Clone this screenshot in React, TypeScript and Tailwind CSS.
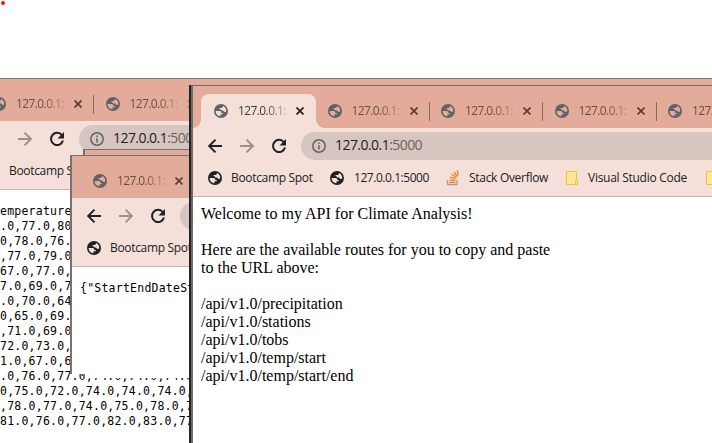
import React from "react";

function Globe({ dim = false }: { dim?: boolean }) {
  return (
    <svg viewBox="0 0 28 28" className={"h-3.5 w-3.5 shrink-0 " + (dim ? "text-[#5f6368]" : "text-[#202124]")}>
      <path
        fill="currentColor"
        fillRule="evenodd"
        d="M14 0a14 14 0 1 0 0 28a14 14 0 0 0 0-28zM3.200 14H11C14 14 14.500 16 14.500 17.800H17.500V20.500H13V24.500A11 11 0 0 1 3.200 14zM18 4.200A10.800 10.800 0 0 1 24.500 14.500C23.500 16.200 21 16.500 19.500 15.200L18.500 13H15.500C13.500 13 13 11.500 13 10H11V7.800H15C17 7.800 18 6.500 18 4.200z"
      />
    </svg>
  );
}

function Cross({ active }: { active: boolean }) {
  return (
    <svg viewBox="0 0 8 8" className={"h-2 w-2 shrink-0 " + (active ? "text-[#202124]" : "text-[#56403c]")}>
      <path d="M.5.5l7 7M7.500.500l-7 7" stroke="currentColor" strokeWidth="1.700" />
    </svg>
  );
}

function Tab({ active }: { active: boolean }) {
  return (
    <div className={"relative flex h-[34px] w-[113.5px] shrink-0 items-center pl-[13px] " + (active ? "rounded-t-lg bg-[#f5e0d9]" : "")}>
      {active && (
        <>
          <span className="absolute bottom-0 -left-2 h-2 w-2 bg-[radial-gradient(circle_at_0_0,#e3ab9a_7.5px,#f5e0d9_8px)]" />
          <span className="absolute -right-[9.5px] bottom-0 h-2 w-2 bg-[radial-gradient(circle_at_100%_0,#e3ab9a_7.5px,#f5e0d9_8px)]" />
          <span className="absolute top-0 -right-[1.5px] h-full w-2 rounded-tr-lg bg-[#f5e0d9]" />
        </>
      )}
      <Globe dim />
      <span
        className={
          "relative ml-[10px] w-[49px] text-[12px] leading-4 tracking-[-0.6px] whitespace-nowrap [mask-image:linear-gradient(to_right,black_55%,transparent_115%)] " +
          (active ? "text-[#3c4043]" : "text-[#6d4f4a]")
        }
      >
        127.0.0.1:
      </span>
      <span className="relative ml-[9px] flex">
        <Cross active={active} />
      </span>
      {!active && <span className="absolute top-[8px] right-[-1.5px] h-[19px] w-px bg-[#8f675c]" />}
    </div>
  );
}

function Arrow({ forward = false }: { forward?: boolean }) {
  return (
    <svg viewBox="0 0 14 14" className={"h-3.5 w-3.5 shrink-0 " + (forward ? "rotate-180 text-[#a08e8a]" : "text-[#202124]")}>
      <path d="M14 7H1.500M7.500.700L1.200 7l6.300 6.300" fill="none" stroke="currentColor" strokeWidth="1.900" />
    </svg>
  );
}

function Reload() {
  return (
    <svg viewBox="0 0 16 16" className="h-4 w-4 shrink-0 text-[#202124]">
      <path d="M13 4.300A6.100 6.100 0 1 0 14 9.600" fill="none" stroke="currentColor" strokeWidth="2" />
      <path d="M15 1v6.500H8.500z" fill="currentColor" />
    </svg>
  );
}

function StackIcon() {
  return (
    <svg viewBox="0 0 14 16" className="h-4 w-3.5 shrink-0" fill="none">
      <path d="M1.500 10v4.500h9.500V10" stroke="#a39c9b" strokeWidth="1.300" />
      <path d="M3.300 12.300h6M3.300 9.900l6 .700M4 7.200l5.600 1.800M5.600 4.300l4.700 3.300M8.100 2l3.200 4.500M11.200.500l1 5" stroke="#f48024" strokeWidth="1.300" />
    </svg>
  );
}

function Folder() {
  return (
    <svg viewBox="0 0 13 14" className="h-3.5 w-[13px] shrink-0">
      <path d="M.5.5h10v13H.5z" fill="#ffe694" stroke="#e8c33f" />
      <path d="M9.500 9.500h2v4h-2z" fill="#ffe694" stroke="#e8c33f" />
    </svg>
  );
}

function Chrome({ active }: { active: number }) {
  return (
    <header className="w-[900px]">
      <div className="flex h-[42px] items-end bg-[#e3ab9a] pl-2">
        {[0, 1, 2, 3, 4].map((i) => (
          <Tab key={i} active={i === active} />
        ))}
      </div>
      <div className="h-[69px] border-b border-[#c5b3ae] bg-[#f5e0d9]">
        <div className="flex h-9 items-center pl-[15px]">
          <Arrow />
          <span className="ml-[18px] flex"><Arrow forward /></span>
          <span className="ml-[17px] flex"><Reload /></span>
          <div className="ml-[14px] flex h-7 w-[500px] items-center rounded-full bg-[#d7c6bf] pl-[11px]">
            <svg viewBox="0 0 14 14" className="h-3.5 w-3.5" fill="none" stroke="#5f6368" strokeWidth="1.500">
              <circle cx="7" cy="7" r="6.200" />
              <path d="M7 6.200v4.200M7 3.500v1.500" />
            </svg>
            <span className="ml-[9px] pb-[2px] text-[14px] leading-5 tracking-[-0.55px] text-[#202124]">
              127.0.0.1<span className="text-[#6a6361]">:5000</span>
            </span>
          </div>
        </div>
        <div className="flex h-7 items-center pl-[15px] text-[12px] whitespace-nowrap text-[#202124]">
          <Globe />
          <span className="ml-[9px] w-[99px] tracking-[-0.32px]">Bootcamp Spot</span>
          <Globe />
          <span className="ml-[10px] w-[92px] tracking-[-0.45px]">127.0.0.1:5000</span>
          <StackIcon />
          <span className="ml-[9px] w-[97px] tracking-[-0.3px]">Stack Overflow</span>
          <Folder />
          <span className="ml-[9px] w-[118px] tracking-[-0.27px]">Visual Studio Code</span>
          <Folder />
        </div>
      </div>
    </header>
  );
}

const readings = [
  "emperature",
  ".0,77.0,80",
  "0,78.0,76.",
  ",77.0,79.0",
  "67.0,77.0,",
  "7.0,69.0,7",
  ".0,70.0,64",
  "0,65.0,69.",
  ",71.0,69.0",
  "72.0,73.0,",
  "1.0,67.0,6",
  ".0,76.0,77.0,74.0,74.0,74.0,7",
  "0,75.0,72.0,74.0,74.0,74.0,",
  ",78.0,77.0,74.0,75.0,78.0,77",
  "81.0,76.0,77.0,82.0,83.0,77",
];

const routes = ["precipitation", "stations", "tobs", "temp/start", "temp/start/end"];

export default function App() {
  return (
    <main className="relative h-[443px] w-[712px] overflow-hidden bg-white font-['Open_Sans','Noto_Sans',sans-serif]">
      <span className="absolute top-[1px] left-[1px] h-1 w-1 rounded-full bg-[#f50f1b]" />

      <section className="absolute top-[78px] left-[-29px] h-[365px] w-[741px] overflow-hidden border-t border-[#777271] bg-white">
        <Chrome active={-1} />
        <pre className="mt-[14px] pl-[29px] font-['DejaVu_Sans_Mono',monospace] text-[11.5px] leading-[15px] tracking-[0.23px] text-black">
          {readings.join("\n")}
        </pre>
      </section>

      <section className="absolute top-[149px] left-[83px] h-[229px] w-[400px] overflow-hidden border-t border-l-2 border-[#777271] bg-white">
        <div className="h-10 bg-[#e3ab9a]" />
      </section>

      <section className="absolute top-[155px] left-[70px] h-[219px] w-[400px] overflow-hidden border-t border-l-2 border-[#777271] bg-white">
        <Chrome active={-1} />
        <pre className="mt-[14px] pl-2 font-['DejaVu_Sans_Mono',monospace] text-[11.5px] leading-[15px] tracking-[0.23px] text-black">
          {'{"StartEndDateStats"'}
        </pre>
      </section>

      <section className="absolute top-[85px] left-[189px] h-[358px] w-[523px] overflow-hidden border-l-2 border-[#252424] bg-white">
        <div className="h-full border-t border-l-2 border-[#6f6b6a]">
          <Chrome active={0} />
          <article className="pt-2 pl-2 font-['Liberation_Serif',serif] text-[16px] leading-[18px] text-black">
            <p>Welcome to my API for Climate Analysis!</p>
            <p className="mt-[18px]">
              Here are the available routes for you to copy and paste
              <br />
              to the URL above:
            </p>
            <ul className="mt-[18px]">
              {routes.map((route) => (
                <li key={route}>/api/v1.0/{route}</li>
              ))}
            </ul>
          </article>
        </div>
      </section>
    </main>
  );
}
